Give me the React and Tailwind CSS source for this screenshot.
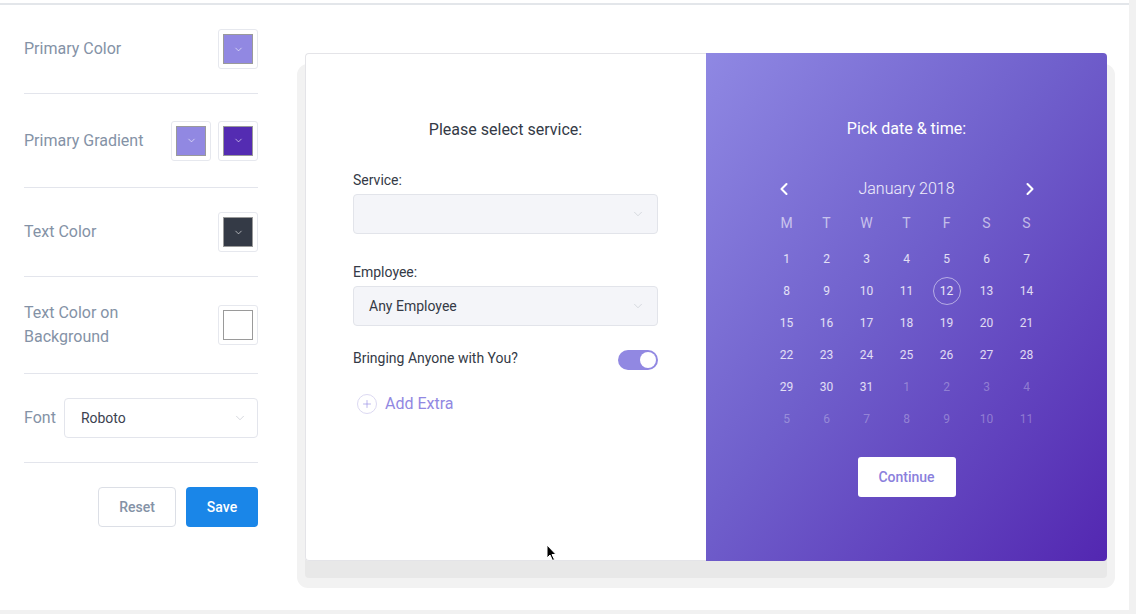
import { ChevronDown, ChevronLeft, ChevronRight, Plus } from "lucide-react";

const font = { fontFamily: "Roboto, 'Liberation Sans', sans-serif" };

function Swatch({ color, light }) {
  return (
    <div className="w-10 h-10 rounded-[3px] border border-[#e6e8ee] bg-white p-[4px] flex">
      <div
        className="flex-1 border border-[#9a9a9a] flex items-center justify-center"
        style={{ backgroundColor: color }}
      >
        {!light && <ChevronDown size={11} strokeWidth={1.5} className="text-white/85" />}
      </div>
    </div>
  );
}

const weeks = [
  [1, 2, 3, 4, 5, 6, 7],
  [8, 9, 10, 11, 12, 13, 14],
  [15, 16, 17, 18, 19, 20, 21],
  [22, 23, 24, 25, 26, 27, 28],
  [29, 30, 31, 1, 2, 3, 4],
  [5, 6, 7, 8, 9, 10, 11],
];

export default function App() {
  return (
    <div className="w-[1136px] h-[614px] bg-white flex overflow-hidden text-[#343a46]" style={font}>
      <div className="w-[1129px] flex flex-col">
        <div className="h-[3px]" />
        <div className="h-[2px] bg-[#e3e6ea]" />
        <div className="flex flex-1">
          {/* Settings sidebar */}
          <div className="w-[234px] ml-6 flex flex-col text-[16px] text-[#8492a6]">
            <div className="h-[89px] flex items-center justify-between border-b border-[#e3e5ec]">
              <span>Primary Color</span>
              <Swatch color="#9188e2" />
            </div>
            <div className="h-[94px] flex items-center justify-between border-b border-[#e3e5ec]">
              <span>Primary Gradient</span>
              <div className="flex gap-[7px]">
                <Swatch color="#9188e2" />
                <Swatch color="#542cb2" />
              </div>
            </div>
            <div className="h-[89px] flex items-center justify-between border-b border-[#e3e5ec]">
              <span>Text Color</span>
              <Swatch color="#343a46" />
            </div>
            <div className="h-[97px] flex items-center justify-between border-b border-[#e3e5ec]">
              <span className="leading-6">
                Text Color on
                <br />
                Background
              </span>
              <Swatch color="#ffffff" light />
            </div>
            <div className="h-[89px] flex items-center gap-[8px] border-b border-[#e3e5ec]">
              <span>Font</span>
              <div className="flex-1 h-10 rounded-[4px] border border-[#e3e5ec] bg-white flex items-center justify-between pl-4 pr-[10px]">
                <span className="text-[14px] text-[#3c4250]">Roboto</span>
                <ChevronDown size={14} strokeWidth={1} className="text-[#b8bcc6]" />
              </div>
            </div>
            <div className="flex justify-end gap-[10px] mt-6">
              <button className="w-[78px] h-10 rounded-[4px] border border-[#dcdfe6] bg-white text-[14px] font-medium text-[#8492a6]">
                Reset
              </button>
              <button className="w-[72px] h-10 rounded-[4px] bg-[#1a86e8] text-[14px] font-medium text-white">
                Save
              </button>
            </div>
          </div>

          {/* Booking widget preview */}
          <div className="ml-[47px] mt-[48px]">
            <div className="relative w-[802px] h-[508px] rounded-[4px] flex shadow-[0_17px_0_0_#e8e8e8,0_19px_0_8px_#f2f2f2]">
              <div className="w-[401px] bg-white rounded-l-[4px] border border-r-0 border-[#e4e4e8] pl-[47px] pr-12 pt-[65px]">
                <div className="text-center text-[16px] leading-5 text-[#343a46] translate-y-[1px]">Please select service:</div>
                <div className="mt-8 text-[14px] leading-[18px]">Service:</div>
                <div className="mt-[5px] h-10 rounded-[4px] border border-[#e2e4ea] bg-[#f4f5f9] flex items-center justify-end pr-[12px]">
                  <ChevronDown size={14} strokeWidth={1} className="text-[#c0c4cc]" />
                </div>
                <div className="mt-[29px] text-[14px] leading-[18px]">Employee:</div>
                <div className="mt-[5px] h-10 rounded-[4px] border border-[#e2e4ea] bg-[#f4f5f9] flex items-center justify-between pl-[15px] pr-[12px]">
                  <span className="text-[14px] text-[#343a46]">Any Employee</span>
                  <ChevronDown size={14} strokeWidth={1} className="text-[#c0c4cc]" />
                </div>
                <div className="mt-[24px] flex items-center justify-between">
                  <span className="text-[14px] leading-[18px] -mt-[4px]">Bringing Anyone with You?</span>
                  <div className="w-10 h-5 rounded-full bg-[#9188e2] flex items-center justify-end pr-[2px]">
                    <div className="w-4 h-4 rounded-full bg-white" />
                  </div>
                </div>
                <div className="mt-[22px] ml-1 flex items-center gap-2">
                  <div className="w-5 h-5 rounded-full border border-[#dcd9f2] flex items-center justify-center">
                    <Plus size={12} strokeWidth={1.25} className="text-[#9188e2]" />
                  </div>
                  <span className="text-[16px] text-[#9188e2]">Add Extra</span>
                </div>
              </div>

              <div className="w-[401px] rounded-r-[4px] bg-[linear-gradient(to_bottom_right,#8f88e3,#7060cc_45%,#5327b1)] text-white flex flex-col items-center pt-[66px]">
                <div className="text-[16px] leading-5">Pick date &amp; time:</div>
                <div className="mt-[38px] w-[266px] flex items-center justify-between">
                  <ChevronLeft size={20} strokeWidth={2.5} />
                  <span className="text-[16px] font-light text-white/90">January 2018</span>
                  <ChevronRight size={20} strokeWidth={2.5} />
                </div>
                <div className="mt-[12px] grid grid-cols-7 w-[280px] text-[14px] text-white/60 text-center leading-5">
                  {["M", "T", "W", "T", "F", "S", "S"].map((d, i) => (
                    <div key={i}>{d}</div>
                  ))}
                </div>
                <div className="mt-[10px] w-[280px] flex flex-col text-[12px]">
                  {weeks.map((w, wi) => (
                    <div key={wi} className="grid grid-cols-7 h-8 text-center">
                      {w.map((d, di) => {
                        const other = (wi === 4 && di > 2) || wi === 5;
                        const sel = wi === 1 && di === 4;
                        return (
                          <div key={di} className="flex items-center justify-center">
                            <span
                              className={
                                sel
                                  ? "w-[28px] h-[28px] rounded-full border border-white/50 flex items-center justify-center text-white/85"
                                  : other
                                  ? "text-white/30"
                                  : "text-white/80"
                              }
                            >
                              {d}
                            </span>
                          </div>
                        );
                      })}
                    </div>
                  ))}
                </div>
                <button className="mt-[22px] w-[98px] h-10 rounded-[3px] bg-white text-[14px] font-medium text-[#8a80dc]">
                  Continue
                </button>
              </div>

              <svg
                className="absolute left-[241px] top-[491px]"
                width="12"
                height="18"
                viewBox="0 0 12 18"
              >
                <path d="M1 1 L1 14 L4 11 L6.5 16.5 L8.5 15.5 L6 10.5 L10 10.5 Z" fill="#000" stroke="#fff" strokeWidth="1" />
              </svg>
            </div>
          </div>
        </div>
        <div className="h-[4px] bg-[#f1f1f1]" />
      </div>
      <div className="flex-1 bg-[#f1f1f1]" />
    </div>
  );
}
